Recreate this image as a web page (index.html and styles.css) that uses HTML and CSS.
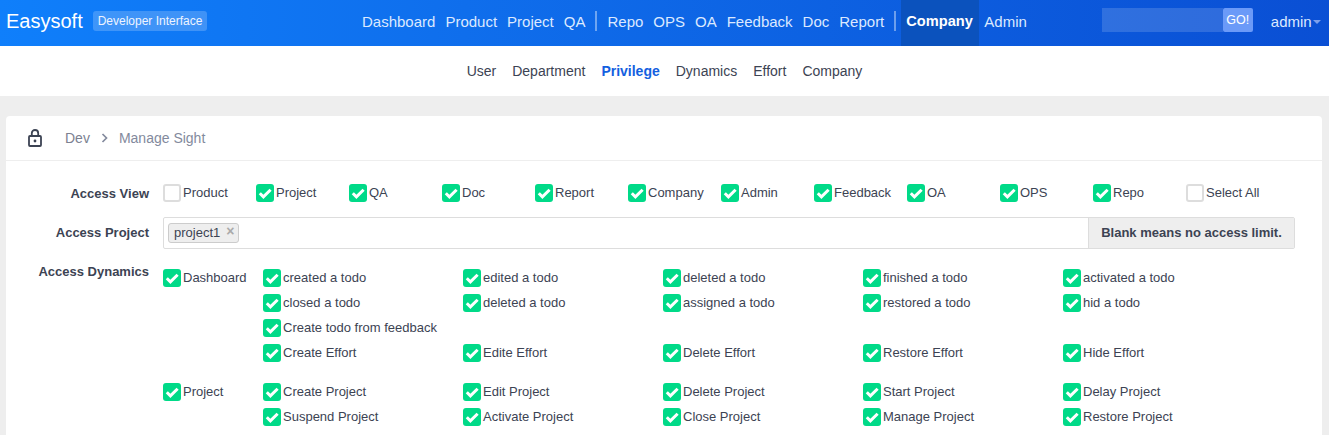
FILE: index.html
```html
<!DOCTYPE html>
<html lang="en">
<head>
<meta charset="utf-8">
<title>Manage Sight</title>
<link rel="stylesheet" href="styles.css">
</head>
<body>
<svg class="defs" width="0" height="0" aria-hidden="true"><symbol id="tick" viewBox="0 0 18 18"><path d="M3.8 9.3l3.6 3.6L14.6 5.7" fill="none" stroke="#fff" stroke-width="3"/></symbol></svg>
<header class="topbar">
  <a class="brand">Easysoft</a>
  <span class="badge">Developer Interface</span>
  <nav class="mainnav">
    <a>Dashboard</a><a>Product</a><a>Project</a><a>QA</a><i class="sep"></i>
    <a>Repo</a><a>OPS</a><a>OA</a><a>Feedback</a><a>Doc</a><a>Report</a><i class="sep"></i>
    <a class="active">Company</a><a>Admin</a>
  </nav>
  <div class="search"><span class="search-input"></span><span class="go">GO!</span></div>
  <a class="user">admin<i class="caret"></i></a>
</header>
<nav class="subnav">
  <a>User</a><a>Department</a><a class="on">Privilege</a><a>Dynamics</a><a>Effort</a><a>Company</a>
</nav>
<main class="card">
  <div class="crumbs">
    <svg class="lock" width="14" height="18" viewBox="0 0 14 18"><rect x="1" y="7" width="12" height="10" rx="1" fill="none" stroke="#3c4353" stroke-width="1.8"/><path d="M3.8 7V4.2a3.2 3.2 0 0 1 6.4 0V7" fill="none" stroke="#3c4353" stroke-width="1.8"/><circle cx="7" cy="12" r="1.4" fill="#3c4353"/></svg>
    <span class="crumb-a">Dev</span>
    <svg class="chev" width="8" height="10" viewBox="0 0 8 10"><path d="M1.5 1l4 4-4 4" fill="none" stroke="#838a9d" stroke-width="1.7"/></svg>
    <span class="crumb-b">Manage Sight</span>
  </div>
  <form class="form">
    <div class="row row-view">
      <div class="label">Access View</div>
      <div class="views">
        <label class="ck"><b class="box off"></b>Product</label>
        <label class="ck"><b class="box"><svg><use href="#tick"/></svg></b>Project</label>
        <label class="ck"><b class="box"><svg><use href="#tick"/></svg></b>QA</label>
        <label class="ck"><b class="box"><svg><use href="#tick"/></svg></b>Doc</label>
        <label class="ck"><b class="box"><svg><use href="#tick"/></svg></b>Report</label>
        <label class="ck"><b class="box"><svg><use href="#tick"/></svg></b>Company</label>
        <label class="ck"><b class="box"><svg><use href="#tick"/></svg></b>Admin</label>
        <label class="ck"><b class="box"><svg><use href="#tick"/></svg></b>Feedback</label>
        <label class="ck"><b class="box"><svg><use href="#tick"/></svg></b>OA</label>
        <label class="ck"><b class="box"><svg><use href="#tick"/></svg></b>OPS</label>
        <label class="ck"><b class="box"><svg><use href="#tick"/></svg></b>Repo</label>
        <label class="ck"><b class="box off"></b>Select All</label>
      </div>
    </div>
    <div class="row row-project">
      <div class="label">Access Project</div>
      <div class="picker">
        <div class="picker-field"><span class="chip">project1<i class="x">×</i></span></div>
        <div class="addon">Blank means no access limit.</div>
      </div>
    </div>
    <div class="row row-dyn">
      <div class="label">Access Dynamics</div>
      <div class="groups">
        <section class="group">
          <label class="ck head"><b class="box"><svg><use href="#tick"/></svg></b>Dashboard</label>
          <div class="acts">
            <label class="ck"><b class="box"><svg><use href="#tick"/></svg></b>created a todo</label>
            <label class="ck"><b class="box"><svg><use href="#tick"/></svg></b>edited a todo</label>
            <label class="ck"><b class="box"><svg><use href="#tick"/></svg></b>deleted a todo</label>
            <label class="ck"><b class="box"><svg><use href="#tick"/></svg></b>finished a todo</label>
            <label class="ck"><b class="box"><svg><use href="#tick"/></svg></b>activated a todo</label>
            <label class="ck"><b class="box"><svg><use href="#tick"/></svg></b>closed a todo</label>
            <label class="ck"><b class="box"><svg><use href="#tick"/></svg></b>deleted a todo</label>
            <label class="ck"><b class="box"><svg><use href="#tick"/></svg></b>assigned a todo</label>
            <label class="ck"><b class="box"><svg><use href="#tick"/></svg></b>restored a todo</label>
            <label class="ck"><b class="box"><svg><use href="#tick"/></svg></b>hid a todo</label>
            <label class="ck wide"><b class="box"><svg><use href="#tick"/></svg></b>Create todo from feedback</label>
            <label class="ck"><b class="box"><svg><use href="#tick"/></svg></b>Create Effort</label>
            <label class="ck"><b class="box"><svg><use href="#tick"/></svg></b>Edite Effort</label>
            <label class="ck"><b class="box"><svg><use href="#tick"/></svg></b>Delete Effort</label>
            <label class="ck"><b class="box"><svg><use href="#tick"/></svg></b>Restore Effort</label>
            <label class="ck"><b class="box"><svg><use href="#tick"/></svg></b>Hide Effort</label>
          </div>
        </section>
        <section class="group">
          <label class="ck head"><b class="box"><svg><use href="#tick"/></svg></b>Project</label>
          <div class="acts">
            <label class="ck"><b class="box"><svg><use href="#tick"/></svg></b>Create Project</label>
            <label class="ck"><b class="box"><svg><use href="#tick"/></svg></b>Edit Project</label>
            <label class="ck"><b class="box"><svg><use href="#tick"/></svg></b>Delete Project</label>
            <label class="ck"><b class="box"><svg><use href="#tick"/></svg></b>Start Project</label>
            <label class="ck"><b class="box"><svg><use href="#tick"/></svg></b>Delay Project</label>
            <label class="ck"><b class="box"><svg><use href="#tick"/></svg></b>Suspend Project</label>
            <label class="ck"><b class="box"><svg><use href="#tick"/></svg></b>Activate Project</label>
            <label class="ck"><b class="box"><svg><use href="#tick"/></svg></b>Close Project</label>
            <label class="ck"><b class="box"><svg><use href="#tick"/></svg></b>Manage Project</label>
            <label class="ck"><b class="box"><svg><use href="#tick"/></svg></b>Restore Project</label>
          </div>
        </section>
      </div>
    </div>
  </form>
</main>
</body>
</html>
```
FILE: styles.css
```css
* { box-sizing: border-box; }
html, body { height: 435px; overflow: hidden; }
body {
  margin: 0;
  background: #eee;
  color: #3c4353;
  font: 13px/18px "Liberation Sans", Arial, sans-serif;
}
.defs { position: absolute; }

.topbar {
  height: 46px;
  display: flex;
  align-items: flex-start;
  padding-left: 6px;
  background: linear-gradient(92deg, #0f7ffb 0%, #0f6eec 35%, #0a4fd4 100%);
  color: #fff;
}
.brand { font-size: 20px; width: 87px; line-height: 42px; }
.badge {
  width: 114px;
  height: 20px;
  margin-top: 11px;
  line-height: 20px;
  text-align: center;
  font-size: 12px;
  background: rgba(255, 255, 255, .2);
  border-radius: 3px;
  color: #eef4ff;
}
.mainnav {
  margin-left: 150px;
  display: flex;
  align-items: flex-start;
  height: 46px;
  font-size: 15px;
  color: #dce9ff;
}
.mainnav a { padding: 0 5px; height: 46px; line-height: 43px; }
.sep { width: 2px; height: 20px; margin: 11px 5px 0; background: rgba(255, 255, 255, .4); }
.mainnav .active {
  width: 78px;
  background: #0b52bd;
  color: #fff;
  font-weight: 700;
  font-size: 14.6px;
}
.search { margin: 8px 0 0 70px; display: flex; width: 151px; height: 24px; }
.search-input { flex: 1; background: rgba(255, 255, 255, .15); }
.go {
  width: 30px;
  line-height: 24px;
  text-align: center;
  font-size: 12.5px;
  background: #6b9af8;
  border-radius: 2px;
  color: #fff;
}
.user { margin-left: 18px; height: 43px; font-size: 15px; color: #dce9ff; display: flex; align-items: center; }
.caret {
  margin-left: 1px;
  border: 4px solid transparent;
  border-top-color: #7d9fec;
  border-bottom: 0;
}

.subnav {
  height: 50px;
  background: #fff;
  display: flex;
  justify-content: center;
  align-items: center;
  gap: 16px;
  font-size: 14px;
}
.subnav .on { color: #1360e0; font-weight: 700; }

.card {
  margin: 20px 7px 0 6px;
  height: 330px;
  background: #fff;
  border-radius: 4px 4px 0 0;
}
.crumbs {
  height: 45px;
  display: flex;
  align-items: center;
  padding-left: 22px;
  border-bottom: 1px solid #eee;
  font-size: 14px;
  color: #838a9d;
}
.lock { margin-right: 23px; }
.crumb-a { color: #7c8191; }
.chev { margin: 0 10px 0 11px; }

.form { padding-top: 14px; }
.row { display: flex; }
.label {
  width: 143px;
  text-align: right;
  font-weight: 700;
  font-size: 13px;
  flex: none;
}
.views { margin-left: 14px; display: grid; grid-template-columns: repeat(12, 93px); }
.row-view .label { padding-top: 10px; line-height: 18px; }
.row-view { height: 42px; }
.views { padding-top: 9px; align-self: flex-start; }
.ck { display: flex; align-items: flex-start; white-space: nowrap; }
.box {
  flex: none;
  width: 18px;
  height: 18px;
  margin-right: 2px;
  background: #00da88;
  border-radius: 3px;
  display: block;
}
.box svg { display: block; width: 18px; height: 18px; }
.box.off { background: #fff; border: 2px solid #ddd; }

.row-project { height: 32px; }
.row-project .label { line-height: 32px; }
.picker {
  margin-left: 14px;
  width: 1132px;
  height: 32px;
  display: flex;
  border: 1px solid #ddd;
  border-radius: 2px;
}
.picker-field { flex: 1; padding: 5px 4px; }
.chip {
  display: inline-flex;
  height: 20px;
  padding: 0 4px 0 5px;
  background: #eee;
  border: 1px solid #ccc;
  border-radius: 3px;
  line-height: 17px;
}
.x { font-style: normal; font-weight: 700; color: #aaa; font-size: 14px; margin-left: 6px; line-height: 14px; }
.addon {
  width: 206px;
  background: #eee;
  border-left: 1px solid #ddd;
  text-align: center;
  font-weight: 700;
  line-height: 30px;
}

.row-dyn { margin-top: 13px; }
.row-dyn .label { line-height: 20px; }
.groups { margin-left: 14px; }
.group { display: flex; margin-top: 7px; margin-bottom: 14px; }
.head { width: 100px; flex: none; }
.acts { display: grid; grid-template-columns: repeat(5, 200px); grid-auto-rows: 25px; }
.wide { grid-column: 1 / -1; }
```
